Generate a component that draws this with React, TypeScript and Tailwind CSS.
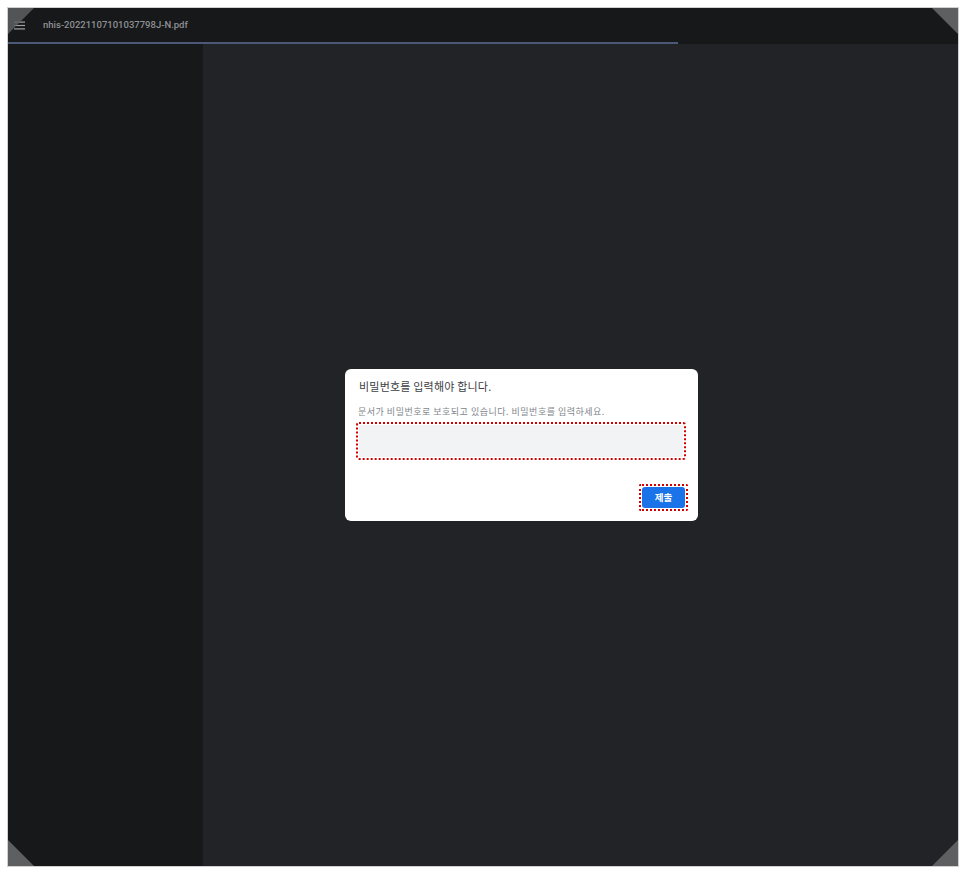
import React from "react";

export default function App() {
  const font = { fontFamily: '"Noto Sans CJK KR", Roboto, "Noto Sans", sans-serif' };
  return (
    <div className="w-[966px] h-[874px] bg-white p-[7px]" style={font}>
      <div className="relative w-[952px] h-[860px] border border-[#d0d0d0] flex flex-col bg-[#222326] overflow-hidden">
        {/* toolbar */}
        <div className="h-[34px] bg-[#17181a] flex items-center shrink-0">
          <div className="w-[22px] flex justify-center">
            <svg width="11" height="9" viewBox="0 0 11 9">
              <rect x="0" y="0.5" width="11" height="1.2" fill="#a0a1a3" />
              <rect x="0" y="3.9" width="11" height="1.2" fill="#a0a1a3" />
              <rect x="0" y="7.3" width="11" height="1.2" fill="#a0a1a3" />
            </svg>
          </div>
          <span className="text-[9.5px] font-medium text-[#8e9094] ml-[13px]" style={{ fontFamily: 'Roboto, "Noto Sans", sans-serif' }}>
            nhis-20221107101037798J-N.pdf
          </span>
        </div>
        <div className="h-[2px] bg-[#17181a] shrink-0 flex">
          <div className="w-[670px] h-full bg-[#4b5878]" />
        </div>
        <div className="flex flex-1">
          <div className="w-[195px] bg-[#17181a]" />
          <div className="flex-1 bg-[#222326]" />
        </div>

        {/* dialog */}
        <div className="absolute left-[337px] top-[361px] w-[353px] h-[152px] bg-white rounded-[6px] flex flex-col pl-[11px] pr-[11px] pt-[10px]">
          <div className="text-[11px] leading-[14px] text-[#3c4043] ml-[3px] tracking-[0.2px]">비밀번호를 입력해야 합니다.</div>
          <div className="text-[9px] leading-[12px] text-[#80868b] mt-[13px] ml-[2px] tracking-[0.5px]">문서가 비밀번호로 보호되고 있습니다. 비밀번호를 입력하세요.</div>
          <div className="mt-[4px] mr-[1px] h-[38px] border-2 border-dotted border-[#d40000] rounded-[3px] p-[1px]">
            <div className="w-full h-full bg-[#f1f3f4]" />
          </div>
          <div className="flex justify-end mt-[24px] -mr-[1px]">
            <div className="border-2 border-dotted border-[#d40000] rounded-[2px] p-[1px]">
              <div className="w-[43px] h-[21px] bg-[#1a73e8] rounded-[3px] flex items-center justify-center text-white text-[9.5px] font-bold">
                제출
              </div>
            </div>
          </div>
        </div>

        {/* corner marks */}
        <svg className="absolute left-0 top-0" width="26" height="26"><polygon points="0,0 26,0 0,26" fill="#5e5f61" fillOpacity="0.85" /></svg>
        <svg className="absolute right-0 top-0" width="26" height="26"><polygon points="0,0 26,0 26,26" fill="#5e5f61" /></svg>
        <svg className="absolute left-0 bottom-0" width="26" height="26"><polygon points="0,0 26,26 0,26" fill="#5e5f61" /></svg>
        <svg className="absolute right-0 bottom-0" width="26" height="26"><polygon points="26,0 26,26 0,26" fill="#5e5f61" /></svg>
      </div>
    </div>
  );
}
